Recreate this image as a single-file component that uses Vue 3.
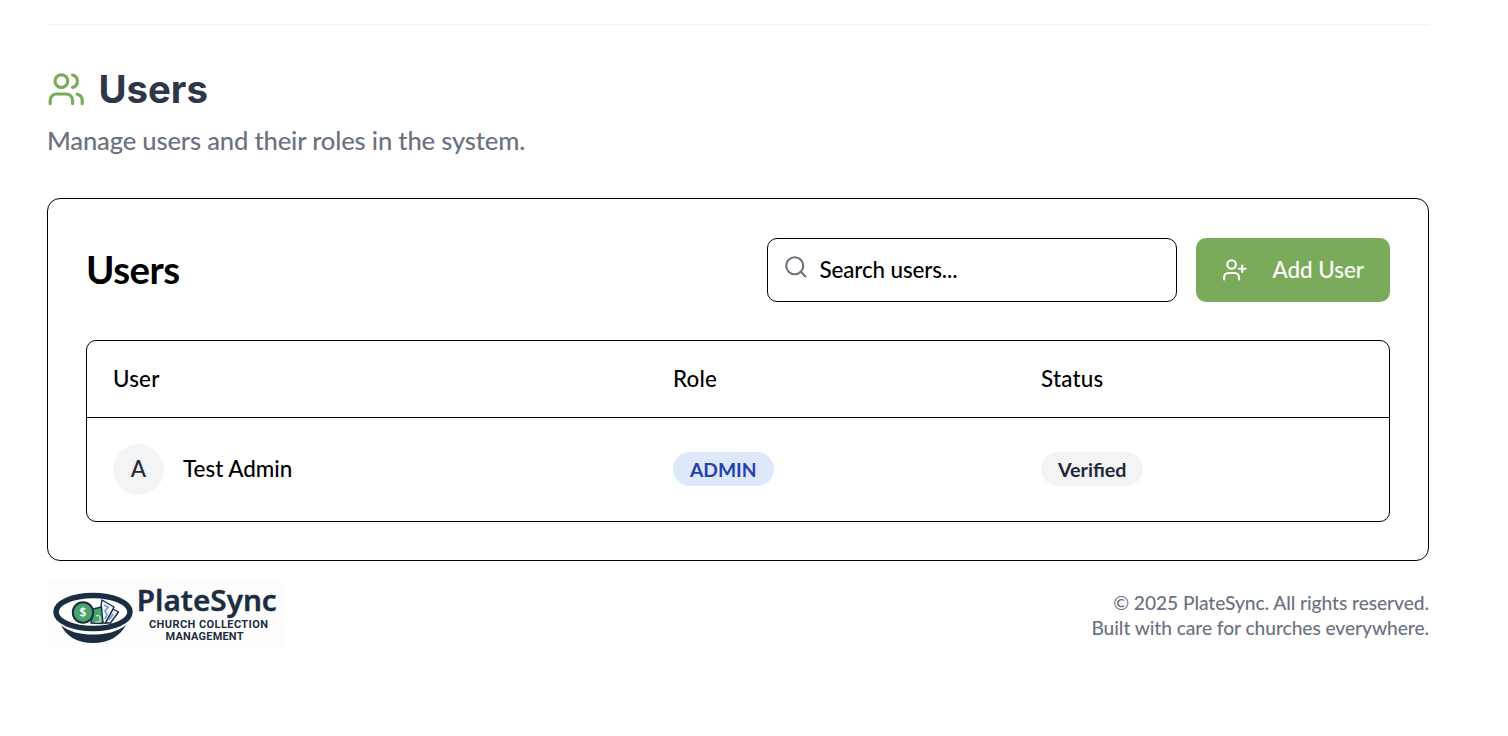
<script setup>
const users = [{ initial: 'A', name: 'Test Admin', role: 'ADMIN', status: 'Verified' }]
</script>

<template>
  <div class="page">
    <header class="heading">
      <div class="title-row">
        <svg class="icon users-icon" viewBox="0 0 24 24">
          <path d="M16 21v-2a4 4 0 0 0-4-4H6a4 4 0 0 0-4 4v2" />
          <circle cx="9" cy="7" r="4" />
          <path d="M22 21v-2a4 4 0 0 0-3-3.87" />
          <path d="M16 3.13a4 4 0 0 1 0 7.75" />
        </svg>
        <h1>Users</h1>
      </div>
      <p>Manage users and their roles in the system.</p>
    </header>

    <section class="card">
      <div class="toolbar">
        <h2>Users</h2>
        <div class="search">
          <svg class="icon search-icon" viewBox="0 0 24 24">
            <circle cx="11" cy="11" r="8" />
            <path d="m21 21-4.3-4.3" />
          </svg>
          <span>Search users...</span>
        </div>
        <button class="add" type="button">
          <svg class="icon add-icon" viewBox="0 0 24 24">
            <path d="M16 21v-2a4 4 0 0 0-4-4H6a4 4 0 0 0-4 4v2" />
            <circle cx="9" cy="7" r="4" />
            <path d="M19 8v6M22 11h-6" />
          </svg>
          <span>Add User</span>
        </button>
      </div>

      <div class="table">
        <div class="row head">
          <span>User</span><span>Role</span><span>Status</span>
        </div>
        <div v-for="u in users" :key="u.name" class="row body">
          <div class="person">
            <span class="avatar">{{ u.initial }}</span>
            <span class="name">{{ u.name }}</span>
          </div>
          <div class="cell"><span class="badge role">{{ u.role }}</span></div>
          <div class="cell"><span class="badge status">{{ u.status }}</span></div>
        </div>
      </div>
    </section>

    <footer class="footer">
      <svg class="logo" viewBox="0 0 236 70">
        <rect width="236" height="70" fill="#fdfdfd" />
        <path d="M14 45C19 56 30 63 46 63S73 56 79 45C70 52 59 54.500 46 54.500S22 52 14 45Z" fill="#1c2d42" />
        <ellipse cx="46" cy="32" rx="37" ry="16.500" fill="#fff" stroke="#1c2d42" stroke-width="5.500" />
        <g stroke="#1c2d42" stroke-width="1.400" stroke-linejoin="round">
          <path d="m66 29 5.500 3-8 11h-5Z" fill="#e9f1fa" />
          <path d="m55 20 12 7-9 16.500-6-4Z" fill="#f5f9fd" />
          <path d="m46 29 8.500-2 1.500 16.500-12-.500Z" fill="#48a66c" />
        </g>
        <path d="m57 25 4 2-3 4 2 3-2 5M66 34l-4 6" fill="none" stroke="#72a5d9" stroke-width="1.900" />
        <path d="M49 36q3-1.500 4 1v5h-5" fill="none" stroke="#d4efdf" stroke-width="1.200" />
        <circle cx="36" cy="32.500" r="10.200" fill="#48a66c" stroke="#1c2d42" stroke-width="2" />
        <text class="dollar" x="36" y="37" text-anchor="middle">$</text>
        <text class="brand" x="89.800" y="31" textLength="140" lengthAdjust="spacingAndGlyphs">PlateSync</text>
        <text class="tagline" x="102" y="47.800" textLength="119">CHURCH COLLECTION</text>
        <text class="tagline" x="118.500" y="60.200" textLength="78">MANAGEMENT</text>
      </svg>
      <p>© 2025 PlateSync. All rights reserved.<br />Built with care for churches everywhere.</p>
    </footer>
  </div>
</template>

<style>
body { background: #fff; }
</style>

<style scoped>
.page {
  box-sizing: border-box;
  width: 1508px;
  height: 736px;
  padding: 24px 79px 0 47px;
  font-family: Lato, "Liberation Sans", sans-serif;
  font-size: 22.4px;
  font-weight: 400;
  color: #000;
}
h1, h2, p { margin: 0; }
.icon {
  fill: none;
  stroke: currentColor;
  stroke-width: 2;
  stroke-linecap: round;
  stroke-linejoin: round;
  flex: none;
}
.heading {
  box-sizing: border-box;
  height: 174px;
  padding-top: 42px;
  border-top: 1px solid #f3f4f6;
}
.title-row { display: flex; align-items: center; gap: 13px; height: 44px; }
.users-icon { width: 38.4px; height: 38.4px; color: #7aab5a; }
h1 {
  font-family: Inter, sans-serif;
  font-size: 38.4px;
  line-height: 44px;
  font-weight: 700;
  color: #2d3748;
}
.heading p {
  margin-top: 9px;
  font-size: 25.6px;
  line-height: 40px;
  font-weight: 500;
  letter-spacing: -0.17px;
  color: #6b7280;
}
.card {
  box-sizing: border-box;
  height: 363px;
  padding: 39px 38px 0;
  border: 1px solid #000;
  border-radius: 13px;
}
.toolbar { display: flex; align-items: center; height: 64px; }
h2 {
  flex: 1;
  padding-bottom: 2px;
  font-size: 38.4px;
  line-height: 38.4px;
  font-weight: 700;
  letter-spacing: -0.5px;
}
.search {
  box-sizing: border-box;
  display: flex;
  align-items: center;
  gap: 11px;
  width: 410px;
  height: 64px;
  padding-left: 15px;
  border: 1px solid #000;
  border-radius: 10px;
  font-weight: 500;
  letter-spacing: -0.13px;
}
.search span, .add span, .head span, .name { padding-bottom: 2px; }
.search-icon { width: 25.6px; height: 25.6px; margin-bottom: 6px; color: #6b7280; }
.add {
  display: flex;
  align-items: center;
  justify-content: space-between;
  width: 194px;
  height: 64px;
  margin-left: 19px;
  padding: 0 26px;
  border: 0;
  border-radius: 10px;
  background: #7aab5a;
  color: #fff;
  font: inherit;
  font-weight: 500;
}
.add-icon { width: 25.6px; height: 25.6px; margin-bottom: 1px; }
.table {
  box-sizing: border-box;
  height: 182px;
  margin-top: 38px;
  border: 1px solid #000;
  border-radius: 10px;
}
.row {
  display: grid;
  grid-template-columns: 560px 368px 1fr;
  align-items: center;
  padding-left: 26px;
  font-weight: 500;
}
.head { height: 76px; border-bottom: 1px solid #000; letter-spacing: 0.2px; }
.body { height: 103px; }
.person { display: flex; align-items: center; gap: 19px; }
.avatar {
  box-sizing: border-box;
  display: grid;
  place-items: center;
  width: 51px;
  height: 51px;
  padding-bottom: 2px;
  border-radius: 50%;
  background: #f3f4f6;
  color: #1f2937;
}
.cell { display: flex; padding-bottom: 1px; }
.badge {
  display: flex;
  align-items: center;
  box-sizing: border-box;
  height: 34px;
  padding: 1px 17px 0;
  border-radius: 17px;
  font-size: 19.2px;
  font-weight: 700;
}
.role { background: #dde8fb; color: #2440af; }
.status { background: #f3f4f6; color: #1f2937; font-size: 19.7px; }
.footer { display: flex; justify-content: space-between; padding-top: 19px; }
.logo { width: 236px; height: 70px; }
.brand { font: 600 29px "Noto Sans", sans-serif; fill: #1c2d42; stroke: #1c2d42; stroke-width: 0.4px; }
.tagline { font: 700 11px Roboto, sans-serif; fill: #1c2d42; }
.dollar { font: 600 12px "Noto Sans", sans-serif; fill: #fff; }
.footer p {
  padding-top: 10px;
  font-size: 19.2px;
  line-height: 25.2px;
  font-weight: 500;
  letter-spacing: -0.06px;
  text-align: right;
  color: #6b7280;
}
</style>
